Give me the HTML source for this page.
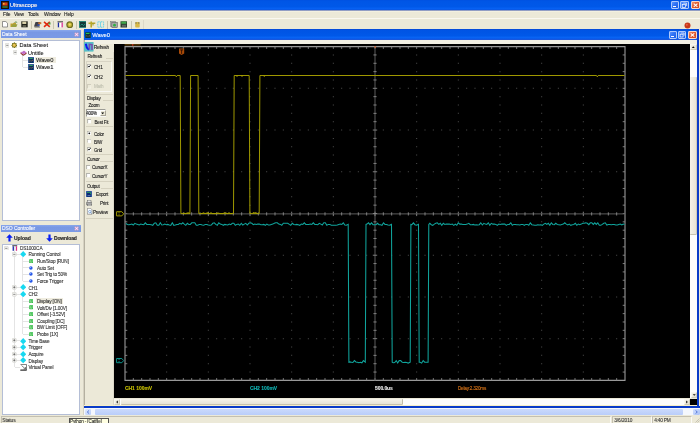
<!DOCTYPE html>
<html><head><meta charset="utf-8"><style>*{margin:0;padding:0;box-sizing:border-box}
html,body{width:700px;height:423px;overflow:hidden}
body{position:relative;background:#ECE9D8;font-family:"Liberation Sans",sans-serif;font-size:5px;line-height:1;color:#000}
.a{position:absolute;display:block}
.t{position:absolute;white-space:nowrap;line-height:1;-webkit-text-stroke:0.1px currentColor}</style></head><body><div style="position:absolute;left:0;top:0;width:700px;height:423px;overflow:hidden;will-change:transform">
<div class="a" style="left:0px;top:0px;width:700px;height:11px;background:linear-gradient(#0050e0 0%,#0056e6 9%,#0058e8 60%,#0862f4 80%,#0a58e4 88%,#8090c0 92%,#a8b0c8 100%)"></div>
<div class="a" style="left:0px;top:11px;width:700px;height:1px;background:#f3f0e0"></div>
<svg class="a" style="left:1px;top:1px" width="8" height="8" viewBox="0 0 8 8"><rect x=".5" y=".5" width="7" height="7" fill="#3a2010" stroke="#181008"/><rect x="1.5" y="1.5" width="5" height="3" fill="#d84018"/><rect x="2" y="2" width="1.5" height="1.5" fill="#f0c030"/><rect x="1.5" y="5.5" width="5" height="1" fill="#30b050"/></svg>
<div class="t" style="left:9.8px;top:2px;font-size:6px;letter-spacing:-0.13px;color:#fff;text-shadow:0.4px 0.4px 0 #0a2a90">Ultrascope</div>
<div class="a" style="left:671.2px;top:0.7px;width:8.3px;height:8.5px;background:linear-gradient(135deg,#5a94ff,#2f72f4 45%,#1e5ee8);border:0.6px solid rgba(220,232,255,0.75);border-radius:1.4px"></div>
<div class="a" style="left:673.2px;top:5.999999999999999px;width:3.2px;height:1.1px;background:#fff"></div>
<div class="a" style="left:680.3px;top:0.7px;width:8.8px;height:8.5px;background:linear-gradient(135deg,#5a94ff,#2f72f4 45%,#1e5ee8);border:0.6px solid rgba(220,232,255,0.75);border-radius:1.4px"></div>
<svg class="a" style="left:680.3px;top:0.7px" width="8.8" height="8.5" viewBox="0 0 8.8 8.5"><path d="M3.34 2.12H6.60V4.93" fill="none" stroke="#fff" stroke-width=".7"/><rect x="2.20" y="3.40" width="3.26" height="2.97" fill="none" stroke="#fff" stroke-width=".7"/></svg>
<div class="a" style="left:690.8px;top:0.7px;width:9.2px;height:8.5px;background:linear-gradient(135deg,#f0906c,#e05a30 45%,#d04820);border:0.6px solid rgba(255,235,225,0.85);border-radius:1.4px"></div>
<svg class="a" style="left:690.8px;top:0.7px" width="9.2" height="8.5" viewBox="0 0 9.2 8.5"><path d="M2.76 2.55L6.44 5.95M6.44 2.55L2.76 5.95" stroke="#fff" stroke-width="1.1"/></svg>
<div class="t" style="left:3px;top:13px;font-size:4.9px;letter-spacing:-0.15px;color:#222">File</div>
<div class="t" style="left:14px;top:13px;font-size:4.9px;letter-spacing:-0.15px;color:#222">View</div>
<div class="t" style="left:28px;top:13px;font-size:4.9px;letter-spacing:-0.15px;color:#222">Tools</div>
<div class="t" style="left:44px;top:13px;font-size:4.9px;letter-spacing:-0.15px;color:#222">Window</div>
<div class="t" style="left:64px;top:13px;font-size:4.9px;letter-spacing:-0.15px;color:#222">Help</div>
<div class="a" style="left:0px;top:18.3px;width:700px;height:0.8px;background:#faf8f0"></div>
<svg class="a" style="left:2px;top:21.2px" width="6" height="6.5" viewBox="0 0 6 6.5"><path d="M.5 .5H3.8L5.5 2.2V6H.5Z" fill="#fff" stroke="#505050" stroke-width=".6"/></svg>
<svg class="a" style="left:10px;top:21.2px" width="8" height="6.5" viewBox="0 0 8 6.5"><path d="M.5 2.5H3L3.5 1.8H6V6H.5Z" fill="#c0a030"/><path d="M1 6L2.5 3.3H7.5L6.3 6Z" fill="#98a040"/><path d="M4.5 1.5Q6 .2 7.2 1.5" stroke="#307030" stroke-width=".7" fill="none"/></svg>
<svg class="a" style="left:20.5px;top:21.2px" width="7" height="6.5" viewBox="0 0 7 6.5"><rect x=".3" y=".3" width="6.4" height="6" fill="#202018"/><rect x="1.3" y=".6" width="4" height="2.4" fill="#d8d0a8"/><rect x="1.6" y="4" width="3.6" height="2" fill="#606050"/></svg>
<div class="a" style="left:31px;top:20.5px;width:0.8px;height:8px;background:#c8c4b0"></div>
<svg class="a" style="left:33.5px;top:21.2px" width="8" height="6.5" viewBox="0 0 8 6.5"><path d="M1.5 1H6.5L5 5.5H0Z" fill="#404048"/><rect x="4.3" y="1.3" width="3" height="1.8" fill="#d07028"/><rect x="3.5" y="3.5" width="2" height="1.5" fill="#3050c0"/><path d="M.5 6H6" stroke="#303030" stroke-width=".7"/></svg>
<svg class="a" style="left:43px;top:21.2px" width="8" height="6.5" viewBox="0 0 8 6.5"><path d="M1 .8L6.8 5.8M6.8 .8L1 5.8" stroke="#e02810" stroke-width="1.6"/><rect x="5.5" y="1.5" width="2" height="2" fill="#40a040"/></svg>
<div class="a" style="left:53px;top:20.5px;width:0.8px;height:8px;background:#c8c4b0"></div>
<svg class="a" style="left:56.5px;top:21.2px" width="7" height="6.5" viewBox="0 0 7 6.5"><path d="M.5 .8H6" stroke="#404040" stroke-width="1"/><rect x=".8" y="1.5" width="1.4" height="4.8" fill="#1a2ca0"/><rect x="4.5" y="1.5" width="1.4" height="4.8" fill="#e040a0"/><rect x="2.5" y="2" width="1.6" height="4.3" fill="#fff"/></svg>
<svg class="a" style="left:65.5px;top:20.9px" width="7.5" height="7.5" viewBox="0 0 7.5 7.5"><circle cx="3.75" cy="3.75" r="3.5" fill="#707020"/><circle cx="3.75" cy="3.75" r="2.2" fill="#c8b838"/><circle cx="3.75" cy="3.5" r="1" fill="#f0e070"/></svg>
<div class="a" style="left:76px;top:20.5px;width:0.8px;height:8px;background:#c8c4b0"></div>
<svg class="a" style="left:78.5px;top:21.2px" width="7.5" height="6.8" viewBox="0 0 7.5 6.8"><rect x=".4" y=".4" width="6.7" height="6" fill="#153838" stroke="#108878" stroke-width=".7"/><path d="M1.5 4.5L3 3 4.5 4.5 6 3" stroke="#30c0a0" stroke-width=".6" fill="none"/></svg>
<svg class="a" style="left:87.5px;top:21.2px" width="8" height="7" viewBox="0 0 8 7"><path d="M3.2 .5V6.5M.5 2.2H7.3" stroke="#b8a828" stroke-width="1.6"/><path d="M5 2.2V4.5" stroke="#989020" stroke-width="1"/></svg>
<svg class="a" style="left:97px;top:21.2px" width="7.5" height="7" viewBox="0 0 7.5 7"><rect x=".8" y=".8" width="5.8" height="5.4" fill="none" stroke="#38c8e8" stroke-width=".8" stroke-dasharray="1 .6"/><path d="M3.5 1V6" stroke="#38c8e8" stroke-width=".6"/></svg>
<div class="a" style="left:107px;top:20.5px;width:0.8px;height:8px;background:#c8c4b0"></div>
<svg class="a" style="left:110px;top:21.2px" width="8" height="7" viewBox="0 0 8 7"><rect x=".5" y=".3" width="5" height="5" fill="#c0c0c0" stroke="#707070" stroke-width=".5"/><rect x="1.8" y="1.5" width="5.5" height="5.2" fill="#a8a8a8" stroke="#505050" stroke-width=".5"/><circle cx="4.5" cy="4.2" r="1.4" fill="#30b040"/></svg>
<svg class="a" style="left:119.5px;top:21.2px" width="8" height="7" viewBox="0 0 8 7"><rect x=".5" y=".3" width="6.5" height="6.2" fill="#304030"/><rect x="1.3" y=".6" width="5" height="2.2" fill="#40a848"/><rect x="2" y="3.8" width="4" height="2" fill="#606860"/></svg>
<div class="a" style="left:131px;top:20.5px;width:0.8px;height:8px;background:#c8c4b0"></div>
<svg class="a" style="left:133.5px;top:21.2px" width="7" height="7" viewBox="0 0 7 7"><rect x="1.2" y="1" width="4.5" height="5.5" fill="#d8b848" rx=".8"/><path d="M2 1V3M4.8 1V3" stroke="#606060" stroke-width=".6"/></svg>
<div class="a" style="left:143px;top:20px;width:0.7px;height:9px;background:#dcd8c8"></div>
<svg class="a" style="left:683.5px;top:21.5px" width="7" height="7" viewBox="0 0 7 7"><circle cx="3.5" cy="3.5" r="3" fill="#c83818"/><circle cx="2.8" cy="2.8" r="1" fill="#e86040"/></svg>
<div class="a" style="left:1.2px;top:30px;width:79.6px;height:7.6px;background:linear-gradient(#8aa8ec,#7898e4 30%,#7a9ae6)"></div>
<div class="t" style="left:2px;top:32px;font-size:5px;letter-spacing:-0.05px;color:#fff">Data Sheet</div>
<svg class="a" style="left:74px;top:31.5px" width="5.2" height="5" viewBox="0 0 5.2 5"><rect x=".3" y=".3" width="4.6" height="4.4" fill="#a8a0b8" opacity=".5"/><path d="M1 1L4.2 4M4.2 1L1 4" stroke="#e8a8d8" stroke-width="1.5"/><path d="M1.5 1.5L3.7 3.5M3.7 1.5L1.5 3.5" stroke="#fff" stroke-width=".7"/></svg>
<div class="a" style="left:2.2px;top:40.4px;width:78.3px;height:180.5px;background:#fff;border:0.7px solid #b4bed6"></div>
<div class="a" style="left:22.2px;top:55px;width:0.6px;height:12px;background:#e4e4e4"></div>
<div class="a" style="left:22.5px;top:59.900000000000006px;width:5.5px;height:0.6px;background:#e4e4e4"></div>
<div class="a" style="left:22.5px;top:66.7px;width:5.5px;height:0.6px;background:#e4e4e4"></div>
<svg class="a" style="left:4.5px;top:43.1px" width="4.6" height="4.6" viewBox="0 0 4.6 4.6"><rect x=".4" y=".4" width="3.8" height="3.8" rx=".6" fill="#fbfbf9" stroke="#cacac2" stroke-width=".6"/><path d="M1.2 2.3H3.4" stroke="#505050" stroke-width=".7"/></svg>
<svg class="a" style="left:10.9px;top:41.9px" width="6.6" height="6.6" viewBox="0 0 6.6 6.6"><path d="M3.30 0.10L4.14 1.27L5.56 1.04L5.33 2.46L6.50 3.30L5.33 4.14L5.56 5.56L4.14 5.33L3.30 6.50L2.46 5.33L1.04 5.56L1.27 4.14L0.10 3.30L1.27 2.46L1.04 1.04L2.46 1.27Z" fill="#6a6a10"/><circle cx="3.3" cy="3.3" r="1.7" fill="#d8b040"/><circle cx="3.1" cy="3" r=".8" fill="#f8e080"/></svg>
<div class="t" style="left:19.5px;top:43px;font-size:5.6px;letter-spacing:0.05px;color:#202020">Data Sheet</div>
<svg class="a" style="left:12.5px;top:50.300000000000004px" width="4.6" height="4.6" viewBox="0 0 4.6 4.6"><rect x=".4" y=".4" width="3.8" height="3.8" rx=".6" fill="#fbfbf9" stroke="#cacac2" stroke-width=".6"/><path d="M1.2 2.3H3.4" stroke="#505050" stroke-width=".7"/></svg>
<svg class="a" style="left:19.5px;top:49px" width="7" height="7" viewBox="0 0 7 7"><path d="M.5 4.2L3.2 6.5 6.5 4.6V3.6L3.4 5.6.5 3.4Z" fill="#b02818"/><path d="M.5 3.4L3.4 5.6 6.5 3.6 4 1.4Z" fill="#c070c8"/><path d="M1.8 2.6L4.2 .6 5.4 1.6" stroke="#fff" stroke-width=".8" fill="none"/><path d="M.5 4.2L3.2 6.5 6.5 4.6" stroke="#401010" stroke-width=".5" fill="none"/></svg>
<div class="t" style="left:28px;top:51px;font-size:5.5px;color:#202020">Untitle</div>
<div class="a" style="left:35px;top:57.3px;width:20.5px;height:6px;background:#efecdf"></div>
<svg class="a" style="left:28px;top:57.0px" width="6.2" height="6.4" viewBox="0 0 6.2 6.4"><rect x=".3" y=".3" width="5.6" height="5.8" fill="#0a2a60" stroke="#2050a0" stroke-width=".5"/><rect x="1.2" y="1" width="3.6" height="1" fill="#30a060"/><path d="M1 4.6L2.2 3.4 3.2 4.4 4.2 3.2 5.2 4" stroke="#c09040" stroke-width=".5" fill="none"/></svg>
<div class="t" style="left:36px;top:58px;font-size:5.8px;letter-spacing:-0.1px;color:#202020">Wave0</div>
<svg class="a" style="left:28px;top:63.8px" width="6.2" height="6.4" viewBox="0 0 6.2 6.4"><rect x=".3" y=".3" width="5.6" height="5.8" fill="#0a2a60" stroke="#2050a0" stroke-width=".5"/><rect x="1.2" y="1" width="3.6" height="1" fill="#30a060"/><path d="M1 4.6L2.2 3.4 3.2 4.4 4.2 3.2 5.2 4" stroke="#c09040" stroke-width=".5" fill="none"/></svg>
<div class="t" style="left:36px;top:65px;font-size:5.8px;letter-spacing:-0.1px;color:#202020">Wave1</div>
<div class="a" style="left:1.2px;top:224.5px;width:79.6px;height:7.6px;background:linear-gradient(#8aa8ec,#7898e4 30%,#7a9ae6)"></div>
<div class="t" style="left:2px;top:226px;font-size:5px;letter-spacing:-0.05px;color:#fff">DSO Controller</div>
<svg class="a" style="left:74px;top:226.0px" width="5.2" height="5" viewBox="0 0 5.2 5"><rect x=".3" y=".3" width="4.6" height="4.4" fill="#a8a0b8" opacity=".5"/><path d="M1 1L4.2 4M4.2 1L1 4" stroke="#e8a8d8" stroke-width="1.5"/><path d="M1.5 1.5L3.7 3.5M3.7 1.5L1.5 3.5" stroke="#fff" stroke-width=".7"/></svg>
<svg class="a" style="left:5.5px;top:233.5px" width="7" height="8" viewBox="0 0 7 8"><path d="M3.5 .3L6.8 3.7H4.6V7.6H2.4V3.7H.2Z" fill="#0a20f0"/></svg>
<div class="t" style="left:14px;top:236px;font-size:5px;letter-spacing:-0.05px;color:#181818;font-weight:bold">Upload</div>
<svg class="a" style="left:46px;top:233.5px" width="7" height="8" viewBox="0 0 7 8"><path d="M3.5 7.7L6.8 4.3H4.6V.4H2.4V4.3H.2Z" fill="#0a20f0"/></svg>
<div class="t" style="left:54px;top:236px;font-size:5px;letter-spacing:-0.15px;color:#181818;font-weight:bold">Download</div>
<div class="a" style="left:2.2px;top:243.5px;width:78.3px;height:171.3px;background:#fff;border:0.7px solid #b4bed6"></div>
<div class="a" style="left:14.2px;top:250.3px;width:0.6px;height:117.01999999999998px;background:#e4e4e4"></div>
<div class="a" style="left:22.2px;top:256.94px;width:0.6px;height:24.060000000000002px;background:#e4e4e4"></div>
<div class="a" style="left:22.2px;top:296.78000000000003px;width:0.6px;height:37.339999999999975px;background:#e4e4e4"></div>
<svg class="a" style="left:4.1px;top:245.5px" width="4.6" height="4.6" viewBox="0 0 4.6 4.6"><rect x=".4" y=".4" width="3.8" height="3.8" rx=".6" fill="#fbfbf9" stroke="#cacac2" stroke-width=".6"/><path d="M1.2 2.3H3.4" stroke="#505050" stroke-width=".7"/></svg>
<svg class="a" style="left:11.5px;top:244.8px" width="6" height="6" viewBox="0 0 6 6"><path d="M.3 .8H5.2" stroke="#303030" stroke-width="1"/><rect x=".6" y="1.3" width="1.3" height="4.5" fill="#1828a8"/><rect x="3.8" y="1.3" width="1.3" height="4.5" fill="#e03080"/><rect x="2" y="1.6" width="1.6" height="4.2" fill="#e8e8f0"/></svg>
<div class="t" style="left:19.9px;top:247px;font-size:4.7px;letter-spacing:-0.12px;color:#333333">DS1000CA</div>
<div class="a" style="left:14.5px;top:254.14px;width:5.5px;height:0.6px;background:#e4e4e4"></div>
<svg class="a" style="left:12.3px;top:252.14px" width="4.6" height="4.6" viewBox="0 0 4.6 4.6"><rect x=".4" y=".4" width="3.8" height="3.8" rx=".6" fill="#fbfbf9" stroke="#cacac2" stroke-width=".6"/><path d="M1.2 2.3H3.4" stroke="#505050" stroke-width=".7"/></svg>
<svg class="a" style="left:19.8px;top:251.24px" width="6.4" height="6.4" viewBox="0 0 6.4 6.4"><path d="M3.2 .1L6.3 3.2 3.2 6.3 .1 3.2Z" fill="#18d8f0"/></svg>
<div class="t" style="left:28.4px;top:253px;font-size:4.7px;letter-spacing:-0.12px;color:#333333">Running Control</div>
<div class="a" style="left:22.5px;top:260.78px;width:6.5px;height:0.6px;background:#e4e4e4"></div>
<svg class="a" style="left:28.8px;top:258.88px" width="4.4" height="4.4" viewBox="0 0 4.4 4.4"><rect x=".2" y=".2" width="4" height="4" fill="#28b840" rx=".6"/><path d="M1.3 1V3.2H3.1V1" stroke="#c8f0c0" stroke-width=".6" fill="none"/></svg>
<div class="t" style="left:36.9px;top:260px;font-size:4.7px;letter-spacing:-0.12px;color:#333333">Run/Stop [RUN]</div>
<div class="a" style="left:22.5px;top:267.42px;width:6.5px;height:0.6px;background:#e4e4e4"></div>
<svg class="a" style="left:29.2px;top:265.82000000000005px" width="3.8" height="3.8" viewBox="0 0 3.8 3.8"><circle cx="1.9" cy="1.9" r="1.75" fill="#2858e8"/><circle cx="1.5" cy="1.4" r=".6" fill="#80a8ff"/></svg>
<div class="t" style="left:36.9px;top:267px;font-size:4.7px;letter-spacing:-0.12px;color:#333333">Auto Set</div>
<div class="a" style="left:22.5px;top:274.06px;width:6.5px;height:0.6px;background:#e4e4e4"></div>
<svg class="a" style="left:29.2px;top:272.46000000000004px" width="3.8" height="3.8" viewBox="0 0 3.8 3.8"><circle cx="1.9" cy="1.9" r="1.75" fill="#2858e8"/><circle cx="1.5" cy="1.4" r=".6" fill="#80a8ff"/></svg>
<div class="t" style="left:36.9px;top:273px;font-size:4.7px;letter-spacing:-0.12px;color:#333333">Set Trig to 50%</div>
<div class="a" style="left:22.5px;top:280.7px;width:6.5px;height:0.6px;background:#e4e4e4"></div>
<svg class="a" style="left:29.2px;top:279.1px" width="3.8" height="3.8" viewBox="0 0 3.8 3.8"><circle cx="1.9" cy="1.9" r="1.75" fill="#2858e8"/><circle cx="1.5" cy="1.4" r=".6" fill="#80a8ff"/></svg>
<div class="t" style="left:36.9px;top:280px;font-size:4.7px;letter-spacing:-0.12px;color:#333333">Force Trigger</div>
<div class="a" style="left:14.5px;top:287.34px;width:5.5px;height:0.6px;background:#e4e4e4"></div>
<svg class="a" style="left:12.3px;top:285.34px" width="4.6" height="4.6" viewBox="0 0 4.6 4.6"><rect x=".4" y=".4" width="3.8" height="3.8" rx=".6" fill="#fbfbf9" stroke="#cacac2" stroke-width=".6"/><path d="M1.2 2.3H3.4" stroke="#505050" stroke-width=".7"/><path d="M2.3 1.2V3.4" stroke="#505050" stroke-width=".7"/></svg>
<svg class="a" style="left:19.8px;top:284.44px" width="6.4" height="6.4" viewBox="0 0 6.4 6.4"><path d="M3.2 .1L6.3 3.2 3.2 6.3 .1 3.2Z" fill="#18d8f0"/></svg>
<div class="t" style="left:28.4px;top:287px;font-size:4.7px;letter-spacing:-0.12px;color:#333333">CH1</div>
<div class="a" style="left:14.5px;top:293.98px;width:5.5px;height:0.6px;background:#e4e4e4"></div>
<svg class="a" style="left:12.3px;top:291.98px" width="4.6" height="4.6" viewBox="0 0 4.6 4.6"><rect x=".4" y=".4" width="3.8" height="3.8" rx=".6" fill="#fbfbf9" stroke="#cacac2" stroke-width=".6"/><path d="M1.2 2.3H3.4" stroke="#505050" stroke-width=".7"/></svg>
<svg class="a" style="left:19.8px;top:291.08000000000004px" width="6.4" height="6.4" viewBox="0 0 6.4 6.4"><path d="M3.2 .1L6.3 3.2 3.2 6.3 .1 3.2Z" fill="#18d8f0"/></svg>
<div class="t" style="left:28.4px;top:293px;font-size:4.7px;letter-spacing:-0.12px;color:#333333">CH2</div>
<div class="a" style="left:22.5px;top:300.62px;width:6.5px;height:0.6px;background:#e4e4e4"></div>
<svg class="a" style="left:28.8px;top:298.72px" width="4.4" height="4.4" viewBox="0 0 4.4 4.4"><rect x=".2" y=".2" width="4" height="4" fill="#28b840" rx=".6"/><path d="M1.3 1V3.2H3.1V1" stroke="#c8f0c0" stroke-width=".6" fill="none"/></svg>
<div class="a" style="left:35.5px;top:297.92px;width:27.5px;height:6px;background:#efecdf"></div>
<div class="t" style="left:36.9px;top:300px;font-size:4.7px;letter-spacing:-0.12px;color:#333333">Display [ON]</div>
<div class="a" style="left:22.5px;top:307.26px;width:6.5px;height:0.6px;background:#e4e4e4"></div>
<svg class="a" style="left:28.8px;top:305.36px" width="4.4" height="4.4" viewBox="0 0 4.4 4.4"><rect x=".2" y=".2" width="4" height="4" fill="#28b840" rx=".6"/><path d="M1.3 1V3.2H3.1V1" stroke="#c8f0c0" stroke-width=".6" fill="none"/></svg>
<div class="t" style="left:36.9px;top:307px;font-size:4.7px;letter-spacing:-0.12px;color:#333333">Volt/Div [1.00V]</div>
<div class="a" style="left:22.5px;top:313.9px;width:6.5px;height:0.6px;background:#e4e4e4"></div>
<svg class="a" style="left:28.8px;top:312.0px" width="4.4" height="4.4" viewBox="0 0 4.4 4.4"><rect x=".2" y=".2" width="4" height="4" fill="#28b840" rx=".6"/><path d="M1.3 1V3.2H3.1V1" stroke="#c8f0c0" stroke-width=".6" fill="none"/></svg>
<div class="t" style="left:36.9px;top:313px;font-size:4.7px;letter-spacing:-0.12px;color:#333333">Offset [-3.52V]</div>
<div class="a" style="left:22.5px;top:320.54px;width:6.5px;height:0.6px;background:#e4e4e4"></div>
<svg class="a" style="left:28.8px;top:318.64000000000004px" width="4.4" height="4.4" viewBox="0 0 4.4 4.4"><rect x=".2" y=".2" width="4" height="4" fill="#28b840" rx=".6"/><path d="M1.3 1V3.2H3.1V1" stroke="#c8f0c0" stroke-width=".6" fill="none"/></svg>
<div class="t" style="left:36.9px;top:320px;font-size:4.7px;letter-spacing:-0.12px;color:#333333">Coupling [DC]</div>
<div class="a" style="left:22.5px;top:327.18px;width:6.5px;height:0.6px;background:#e4e4e4"></div>
<svg class="a" style="left:28.8px;top:325.28000000000003px" width="4.4" height="4.4" viewBox="0 0 4.4 4.4"><rect x=".2" y=".2" width="4" height="4" fill="#28b840" rx=".6"/><path d="M1.3 1V3.2H3.1V1" stroke="#c8f0c0" stroke-width=".6" fill="none"/></svg>
<div class="t" style="left:36.9px;top:326px;font-size:4.7px;letter-spacing:-0.12px;color:#333333">BW Limit [OFF]</div>
<div class="a" style="left:22.5px;top:333.82px;width:6.5px;height:0.6px;background:#e4e4e4"></div>
<svg class="a" style="left:28.8px;top:331.92px" width="4.4" height="4.4" viewBox="0 0 4.4 4.4"><rect x=".2" y=".2" width="4" height="4" fill="#28b840" rx=".6"/><path d="M1.3 1V3.2H3.1V1" stroke="#c8f0c0" stroke-width=".6" fill="none"/></svg>
<div class="t" style="left:36.9px;top:333px;font-size:4.7px;letter-spacing:-0.12px;color:#333333">Probe [1X]</div>
<div class="a" style="left:14.5px;top:340.46px;width:5.5px;height:0.6px;background:#e4e4e4"></div>
<svg class="a" style="left:12.3px;top:338.46px" width="4.6" height="4.6" viewBox="0 0 4.6 4.6"><rect x=".4" y=".4" width="3.8" height="3.8" rx=".6" fill="#fbfbf9" stroke="#cacac2" stroke-width=".6"/><path d="M1.2 2.3H3.4" stroke="#505050" stroke-width=".7"/><path d="M2.3 1.2V3.4" stroke="#505050" stroke-width=".7"/></svg>
<svg class="a" style="left:19.8px;top:337.56px" width="6.4" height="6.4" viewBox="0 0 6.4 6.4"><path d="M3.2 .1L6.3 3.2 3.2 6.3 .1 3.2Z" fill="#18d8f0"/></svg>
<div class="t" style="left:28.4px;top:340px;font-size:4.7px;letter-spacing:-0.12px;color:#333333">Time Base</div>
<div class="a" style="left:14.5px;top:347.09999999999997px;width:5.5px;height:0.6px;background:#e4e4e4"></div>
<svg class="a" style="left:12.3px;top:345.09999999999997px" width="4.6" height="4.6" viewBox="0 0 4.6 4.6"><rect x=".4" y=".4" width="3.8" height="3.8" rx=".6" fill="#fbfbf9" stroke="#cacac2" stroke-width=".6"/><path d="M1.2 2.3H3.4" stroke="#505050" stroke-width=".7"/><path d="M2.3 1.2V3.4" stroke="#505050" stroke-width=".7"/></svg>
<svg class="a" style="left:19.8px;top:344.2px" width="6.4" height="6.4" viewBox="0 0 6.4 6.4"><path d="M3.2 .1L6.3 3.2 3.2 6.3 .1 3.2Z" fill="#18d8f0"/></svg>
<div class="t" style="left:28.4px;top:346px;font-size:4.7px;letter-spacing:-0.12px;color:#333333">Trigger</div>
<div class="a" style="left:14.5px;top:353.74px;width:5.5px;height:0.6px;background:#e4e4e4"></div>
<svg class="a" style="left:12.3px;top:351.74px" width="4.6" height="4.6" viewBox="0 0 4.6 4.6"><rect x=".4" y=".4" width="3.8" height="3.8" rx=".6" fill="#fbfbf9" stroke="#cacac2" stroke-width=".6"/><path d="M1.2 2.3H3.4" stroke="#505050" stroke-width=".7"/><path d="M2.3 1.2V3.4" stroke="#505050" stroke-width=".7"/></svg>
<svg class="a" style="left:19.8px;top:350.84000000000003px" width="6.4" height="6.4" viewBox="0 0 6.4 6.4"><path d="M3.2 .1L6.3 3.2 3.2 6.3 .1 3.2Z" fill="#18d8f0"/></svg>
<div class="t" style="left:28.4px;top:353px;font-size:4.7px;letter-spacing:-0.12px;color:#333333">Acquire</div>
<div class="a" style="left:14.5px;top:360.38px;width:5.5px;height:0.6px;background:#e4e4e4"></div>
<svg class="a" style="left:12.3px;top:358.38px" width="4.6" height="4.6" viewBox="0 0 4.6 4.6"><rect x=".4" y=".4" width="3.8" height="3.8" rx=".6" fill="#fbfbf9" stroke="#cacac2" stroke-width=".6"/><path d="M1.2 2.3H3.4" stroke="#505050" stroke-width=".7"/><path d="M2.3 1.2V3.4" stroke="#505050" stroke-width=".7"/></svg>
<svg class="a" style="left:19.8px;top:357.48px" width="6.4" height="6.4" viewBox="0 0 6.4 6.4"><path d="M3.2 .1L6.3 3.2 3.2 6.3 .1 3.2Z" fill="#18d8f0"/></svg>
<div class="t" style="left:28.4px;top:360px;font-size:4.7px;letter-spacing:-0.12px;color:#333333">Display</div>
<div class="a" style="left:14.5px;top:367.02px;width:5.5px;height:0.6px;background:#e4e4e4"></div>
<svg class="a" style="left:19.5px;top:364.12px" width="7" height="6.5" viewBox="0 0 7 6.5"><path d="M.5 .5H6.5V6H.5" fill="#fff" stroke="#303030" stroke-width=".6"/><path d="M1.5 1.5L5.5 5M3.5 5H5.5V3" stroke="#303030" stroke-width=".6" fill="none"/><path d="M.3 6.2H6.7" stroke="#303030" stroke-width=".9"/></svg>
<div class="t" style="left:28.4px;top:366px;font-size:4.7px;letter-spacing:-0.12px;color:#333333">Virtual Panel</div>
<div class="a" style="left:83px;top:29.5px;width:2px;height:386px;background:linear-gradient(90deg,#d6d2c2 50%,#b4b0a0 50%)"></div>
<div class="a" style="left:84px;top:29px;width:615px;height:11px;background:linear-gradient(#0a48d4 0%,#0054e4 10%,#0058e8 60%,#0a66f6 82%,#0850e0 92%,#3060d8 100%)"></div>
<svg class="a" style="left:85px;top:31.5px" width="6" height="6.8" viewBox="0 0 6 6.8"><rect x=".2" y=".2" width="5.6" height="6.4" fill="#0a3040" stroke="#106850" stroke-width=".4"/><rect x="1" y="1" width="3.5" height=".9" fill="#30d050"/><path d="M.8 4.5L2 3.5 3 4.5 4 3.5 5.2 4.5" stroke="#c08030" stroke-width=".5" fill="none"/></svg>
<div class="t" style="left:92.3px;top:33px;font-size:5.8px;letter-spacing:-0.05px;color:#fff">Wave0</div>
<div class="a" style="left:669px;top:31.3px;width:8.2px;height:8px;background:linear-gradient(135deg,#5a94ff,#2f72f4 45%,#1e5ee8);border:0.6px solid rgba(220,232,255,0.75);border-radius:1.4px"></div>
<div class="a" style="left:671px;top:36.099999999999994px;width:3.2px;height:1.1px;background:#fff"></div>
<div class="a" style="left:678px;top:31.3px;width:8.2px;height:8px;background:linear-gradient(135deg,#5a94ff,#2f72f4 45%,#1e5ee8);border:0.6px solid rgba(220,232,255,0.75);border-radius:1.4px"></div>
<svg class="a" style="left:678px;top:31.3px" width="8.2" height="8" viewBox="0 0 8.2 8"><path d="M3.12 2.00H6.15V4.64" fill="none" stroke="#fff" stroke-width=".7"/><rect x="2.05" y="3.20" width="3.03" height="2.80" fill="none" stroke="#fff" stroke-width=".7"/></svg>
<div class="a" style="left:687.8px;top:31.3px;width:9px;height:8px;background:linear-gradient(135deg,#f0906c,#e05a30 45%,#d04820);border:0.6px solid rgba(255,235,225,0.85);border-radius:1.4px"></div>
<svg class="a" style="left:687.8px;top:31.3px" width="9" height="8" viewBox="0 0 9 8"><path d="M2.70 2.40L6.30 5.60M6.30 2.40L2.70 5.60" stroke="#fff" stroke-width="1.1"/></svg>
<div class="a" style="left:85px;top:40.4px;width:612.5px;height:365px;background:#ECE9D8"></div>
<div class="a" style="left:85px;top:40.4px;width:612.5px;height:3.4px;background:#f2f0e4"></div>
<div class="a" style="left:84px;top:405.2px;width:615px;height:0.8px;background:#f8f0c8"></div>
<div class="a" style="left:84px;top:406px;width:616px;height:2px;background:#0a3cc8"></div>
<div class="a" style="left:697.4px;top:29.4px;width:2px;height:378px;background:#0a3cc8"></div>
<div class="a" style="left:114px;top:44.1px;width:576px;height:354.4px;background:#000"></div>
<svg style="position:absolute;left:0;top:0" width="700" height="423" viewBox="0 0 700 423"><path d="M125.0 46.6H625.0V380.4H125.0Z" fill="none" stroke="#999" stroke-width="1.1"/><path d="M133.33 46.6v2.3M133.33 380.4v-2.3M141.67 46.6v2.3M141.67 380.4v-2.3M150.00 46.6v2.3M150.00 380.4v-2.3M158.33 46.6v2.3M158.33 380.4v-2.3M166.67 46.6v2.3M166.67 380.4v-2.3M175.00 46.6v2.3M175.00 380.4v-2.3M183.33 46.6v2.3M183.33 380.4v-2.3M191.67 46.6v2.3M191.67 380.4v-2.3M200.00 46.6v2.3M200.00 380.4v-2.3M208.33 46.6v2.3M208.33 380.4v-2.3M216.67 46.6v2.3M216.67 380.4v-2.3M225.00 46.6v2.3M225.00 380.4v-2.3M233.33 46.6v2.3M233.33 380.4v-2.3M241.67 46.6v2.3M241.67 380.4v-2.3M250.00 46.6v2.3M250.00 380.4v-2.3M258.33 46.6v2.3M258.33 380.4v-2.3M266.67 46.6v2.3M266.67 380.4v-2.3M275.00 46.6v2.3M275.00 380.4v-2.3M283.33 46.6v2.3M283.33 380.4v-2.3M291.67 46.6v2.3M291.67 380.4v-2.3M300.00 46.6v2.3M300.00 380.4v-2.3M308.33 46.6v2.3M308.33 380.4v-2.3M316.67 46.6v2.3M316.67 380.4v-2.3M325.00 46.6v2.3M325.00 380.4v-2.3M333.33 46.6v2.3M333.33 380.4v-2.3M341.67 46.6v2.3M341.67 380.4v-2.3M350.00 46.6v2.3M350.00 380.4v-2.3M358.33 46.6v2.3M358.33 380.4v-2.3M366.67 46.6v2.3M366.67 380.4v-2.3M375.00 46.6v2.3M375.00 380.4v-2.3M383.33 46.6v2.3M383.33 380.4v-2.3M391.67 46.6v2.3M391.67 380.4v-2.3M400.00 46.6v2.3M400.00 380.4v-2.3M408.33 46.6v2.3M408.33 380.4v-2.3M416.67 46.6v2.3M416.67 380.4v-2.3M425.00 46.6v2.3M425.00 380.4v-2.3M433.33 46.6v2.3M433.33 380.4v-2.3M441.67 46.6v2.3M441.67 380.4v-2.3M450.00 46.6v2.3M450.00 380.4v-2.3M458.33 46.6v2.3M458.33 380.4v-2.3M466.67 46.6v2.3M466.67 380.4v-2.3M475.00 46.6v2.3M475.00 380.4v-2.3M483.33 46.6v2.3M483.33 380.4v-2.3M491.67 46.6v2.3M491.67 380.4v-2.3M500.00 46.6v2.3M500.00 380.4v-2.3M508.33 46.6v2.3M508.33 380.4v-2.3M516.67 46.6v2.3M516.67 380.4v-2.3M525.00 46.6v2.3M525.00 380.4v-2.3M533.33 46.6v2.3M533.33 380.4v-2.3M541.67 46.6v2.3M541.67 380.4v-2.3M550.00 46.6v2.3M550.00 380.4v-2.3M558.33 46.6v2.3M558.33 380.4v-2.3M566.67 46.6v2.3M566.67 380.4v-2.3M575.00 46.6v2.3M575.00 380.4v-2.3M583.33 46.6v2.3M583.33 380.4v-2.3M591.67 46.6v2.3M591.67 380.4v-2.3M600.00 46.6v2.3M600.00 380.4v-2.3M608.33 46.6v2.3M608.33 380.4v-2.3M616.67 46.6v2.3M616.67 380.4v-2.3M125.0 54.95h2.3M625.0 54.95h-2.3M125.0 63.29h2.3M625.0 63.29h-2.3M125.0 71.63h2.3M625.0 71.63h-2.3M125.0 79.98h2.3M625.0 79.98h-2.3M125.0 88.32h2.3M625.0 88.32h-2.3M125.0 96.67h2.3M625.0 96.67h-2.3M125.0 105.01h2.3M625.0 105.01h-2.3M125.0 113.36h2.3M625.0 113.36h-2.3M125.0 121.70h2.3M625.0 121.70h-2.3M125.0 130.05h2.3M625.0 130.05h-2.3M125.0 138.39h2.3M625.0 138.39h-2.3M125.0 146.74h2.3M625.0 146.74h-2.3M125.0 155.08h2.3M625.0 155.08h-2.3M125.0 163.43h2.3M625.0 163.43h-2.3M125.0 171.77h2.3M625.0 171.77h-2.3M125.0 180.12h2.3M625.0 180.12h-2.3M125.0 188.46h2.3M625.0 188.46h-2.3M125.0 196.81h2.3M625.0 196.81h-2.3M125.0 205.15h2.3M625.0 205.15h-2.3M125.0 213.50h2.3M625.0 213.50h-2.3M125.0 221.84h2.3M625.0 221.84h-2.3M125.0 230.19h2.3M625.0 230.19h-2.3M125.0 238.53h2.3M625.0 238.53h-2.3M125.0 246.88h2.3M625.0 246.88h-2.3M125.0 255.22h2.3M625.0 255.22h-2.3M125.0 263.57h2.3M625.0 263.57h-2.3M125.0 271.91h2.3M625.0 271.91h-2.3M125.0 280.26h2.3M625.0 280.26h-2.3M125.0 288.60h2.3M625.0 288.60h-2.3M125.0 296.95h2.3M625.0 296.95h-2.3M125.0 305.30h2.3M625.0 305.30h-2.3M125.0 313.64h2.3M625.0 313.64h-2.3M125.0 321.98h2.3M625.0 321.98h-2.3M125.0 330.33h2.3M625.0 330.33h-2.3M125.0 338.67h2.3M625.0 338.67h-2.3M125.0 347.02h2.3M625.0 347.02h-2.3M125.0 355.37h2.3M625.0 355.37h-2.3M125.0 363.71h2.3M625.0 363.71h-2.3M125.0 372.06h2.3M625.0 372.06h-2.3" stroke="#8a8a8a" stroke-width="0.9"/><path d="M375.00 46.6V380.4M125.0 213.90H625.0" stroke="#5c5c5c" stroke-width="1"/><path d="M133.33 212.30v3.2M141.67 212.30v3.2M150.00 212.30v3.2M158.33 212.30v3.2M166.67 211.70v4.4M175.00 212.30v3.2M183.33 212.30v3.2M191.67 212.30v3.2M200.00 212.30v3.2M208.33 211.70v4.4M216.67 212.30v3.2M225.00 212.30v3.2M233.33 212.30v3.2M241.67 212.30v3.2M250.00 211.70v4.4M258.33 212.30v3.2M266.67 212.30v3.2M275.00 212.30v3.2M283.33 212.30v3.2M291.67 211.70v4.4M300.00 212.30v3.2M308.33 212.30v3.2M316.67 212.30v3.2M325.00 212.30v3.2M333.33 211.70v4.4M341.67 212.30v3.2M350.00 212.30v3.2M358.33 212.30v3.2M366.67 212.30v3.2M375.00 211.70v4.4M383.33 212.30v3.2M391.67 212.30v3.2M400.00 212.30v3.2M408.33 212.30v3.2M416.67 211.70v4.4M425.00 212.30v3.2M433.33 212.30v3.2M441.67 212.30v3.2M450.00 212.30v3.2M458.33 211.70v4.4M466.67 212.30v3.2M475.00 212.30v3.2M483.33 212.30v3.2M491.67 212.30v3.2M500.00 211.70v4.4M508.33 212.30v3.2M516.67 212.30v3.2M525.00 212.30v3.2M533.33 212.30v3.2M541.67 211.70v4.4M550.00 212.30v3.2M558.33 212.30v3.2M566.67 212.30v3.2M575.00 212.30v3.2M583.33 211.70v4.4M591.67 212.30v3.2M600.00 212.30v3.2M608.33 212.30v3.2M616.67 212.30v3.2M373.40 54.95h3.2M373.40 63.29h3.2M373.40 71.63h3.2M373.40 79.98h3.2M372.80 88.32h4.4M373.40 96.67h3.2M373.40 105.01h3.2M373.40 113.36h3.2M373.40 121.70h3.2M372.80 130.05h4.4M373.40 138.39h3.2M373.40 146.74h3.2M373.40 155.08h3.2M373.40 163.43h3.2M372.80 171.77h4.4M373.40 180.12h3.2M373.40 188.46h3.2M373.40 196.81h3.2M373.40 205.15h3.2M372.80 213.50h4.4M373.40 221.84h3.2M373.40 230.19h3.2M373.40 238.53h3.2M373.40 246.88h3.2M372.80 255.22h4.4M373.40 263.57h3.2M373.40 271.91h3.2M373.40 280.26h3.2M373.40 288.60h3.2M372.80 296.95h4.4M373.40 305.30h3.2M373.40 313.64h3.2M373.40 321.98h3.2M373.40 330.33h3.2M372.80 338.67h4.4M373.40 347.02h3.2M373.40 355.37h3.2M373.40 363.71h3.2M373.40 372.06h3.2" stroke="#8a8a8a" stroke-width="0.9"/><path d="M166.17 54.45h1v1h-1zM166.17 62.79h1v1h-1zM166.17 71.13h1v1h-1zM166.17 79.48h1v1h-1zM166.17 87.82h1v1h-1zM166.17 96.17h1v1h-1zM166.17 104.51h1v1h-1zM166.17 112.86h1v1h-1zM166.17 121.20h1v1h-1zM166.17 129.55h1v1h-1zM166.17 137.89h1v1h-1zM166.17 146.24h1v1h-1zM166.17 154.58h1v1h-1zM166.17 162.93h1v1h-1zM166.17 171.27h1v1h-1zM166.17 179.62h1v1h-1zM166.17 187.96h1v1h-1zM166.17 196.31h1v1h-1zM166.17 204.65h1v1h-1zM166.17 213.00h1v1h-1zM166.17 221.34h1v1h-1zM166.17 229.69h1v1h-1zM166.17 238.03h1v1h-1zM166.17 246.38h1v1h-1zM166.17 254.72h1v1h-1zM166.17 263.07h1v1h-1zM166.17 271.41h1v1h-1zM166.17 279.76h1v1h-1zM166.17 288.10h1v1h-1zM166.17 296.45h1v1h-1zM166.17 304.80h1v1h-1zM166.17 313.14h1v1h-1zM166.17 321.48h1v1h-1zM166.17 329.83h1v1h-1zM166.17 338.17h1v1h-1zM166.17 346.52h1v1h-1zM166.17 354.87h1v1h-1zM166.17 363.21h1v1h-1zM166.17 371.56h1v1h-1zM207.83 54.45h1v1h-1zM207.83 62.79h1v1h-1zM207.83 71.13h1v1h-1zM207.83 79.48h1v1h-1zM207.83 87.82h1v1h-1zM207.83 96.17h1v1h-1zM207.83 104.51h1v1h-1zM207.83 112.86h1v1h-1zM207.83 121.20h1v1h-1zM207.83 129.55h1v1h-1zM207.83 137.89h1v1h-1zM207.83 146.24h1v1h-1zM207.83 154.58h1v1h-1zM207.83 162.93h1v1h-1zM207.83 171.27h1v1h-1zM207.83 179.62h1v1h-1zM207.83 187.96h1v1h-1zM207.83 196.31h1v1h-1zM207.83 204.65h1v1h-1zM207.83 213.00h1v1h-1zM207.83 221.34h1v1h-1zM207.83 229.69h1v1h-1zM207.83 238.03h1v1h-1zM207.83 246.38h1v1h-1zM207.83 254.72h1v1h-1zM207.83 263.07h1v1h-1zM207.83 271.41h1v1h-1zM207.83 279.76h1v1h-1zM207.83 288.10h1v1h-1zM207.83 296.45h1v1h-1zM207.83 304.80h1v1h-1zM207.83 313.14h1v1h-1zM207.83 321.48h1v1h-1zM207.83 329.83h1v1h-1zM207.83 338.17h1v1h-1zM207.83 346.52h1v1h-1zM207.83 354.87h1v1h-1zM207.83 363.21h1v1h-1zM207.83 371.56h1v1h-1zM249.50 54.45h1v1h-1zM249.50 62.79h1v1h-1zM249.50 71.13h1v1h-1zM249.50 79.48h1v1h-1zM249.50 87.82h1v1h-1zM249.50 96.17h1v1h-1zM249.50 104.51h1v1h-1zM249.50 112.86h1v1h-1zM249.50 121.20h1v1h-1zM249.50 129.55h1v1h-1zM249.50 137.89h1v1h-1zM249.50 146.24h1v1h-1zM249.50 154.58h1v1h-1zM249.50 162.93h1v1h-1zM249.50 171.27h1v1h-1zM249.50 179.62h1v1h-1zM249.50 187.96h1v1h-1zM249.50 196.31h1v1h-1zM249.50 204.65h1v1h-1zM249.50 213.00h1v1h-1zM249.50 221.34h1v1h-1zM249.50 229.69h1v1h-1zM249.50 238.03h1v1h-1zM249.50 246.38h1v1h-1zM249.50 254.72h1v1h-1zM249.50 263.07h1v1h-1zM249.50 271.41h1v1h-1zM249.50 279.76h1v1h-1zM249.50 288.10h1v1h-1zM249.50 296.45h1v1h-1zM249.50 304.80h1v1h-1zM249.50 313.14h1v1h-1zM249.50 321.48h1v1h-1zM249.50 329.83h1v1h-1zM249.50 338.17h1v1h-1zM249.50 346.52h1v1h-1zM249.50 354.87h1v1h-1zM249.50 363.21h1v1h-1zM249.50 371.56h1v1h-1zM291.17 54.45h1v1h-1zM291.17 62.79h1v1h-1zM291.17 71.13h1v1h-1zM291.17 79.48h1v1h-1zM291.17 87.82h1v1h-1zM291.17 96.17h1v1h-1zM291.17 104.51h1v1h-1zM291.17 112.86h1v1h-1zM291.17 121.20h1v1h-1zM291.17 129.55h1v1h-1zM291.17 137.89h1v1h-1zM291.17 146.24h1v1h-1zM291.17 154.58h1v1h-1zM291.17 162.93h1v1h-1zM291.17 171.27h1v1h-1zM291.17 179.62h1v1h-1zM291.17 187.96h1v1h-1zM291.17 196.31h1v1h-1zM291.17 204.65h1v1h-1zM291.17 213.00h1v1h-1zM291.17 221.34h1v1h-1zM291.17 229.69h1v1h-1zM291.17 238.03h1v1h-1zM291.17 246.38h1v1h-1zM291.17 254.72h1v1h-1zM291.17 263.07h1v1h-1zM291.17 271.41h1v1h-1zM291.17 279.76h1v1h-1zM291.17 288.10h1v1h-1zM291.17 296.45h1v1h-1zM291.17 304.80h1v1h-1zM291.17 313.14h1v1h-1zM291.17 321.48h1v1h-1zM291.17 329.83h1v1h-1zM291.17 338.17h1v1h-1zM291.17 346.52h1v1h-1zM291.17 354.87h1v1h-1zM291.17 363.21h1v1h-1zM291.17 371.56h1v1h-1zM332.83 54.45h1v1h-1zM332.83 62.79h1v1h-1zM332.83 71.13h1v1h-1zM332.83 79.48h1v1h-1zM332.83 87.82h1v1h-1zM332.83 96.17h1v1h-1zM332.83 104.51h1v1h-1zM332.83 112.86h1v1h-1zM332.83 121.20h1v1h-1zM332.83 129.55h1v1h-1zM332.83 137.89h1v1h-1zM332.83 146.24h1v1h-1zM332.83 154.58h1v1h-1zM332.83 162.93h1v1h-1zM332.83 171.27h1v1h-1zM332.83 179.62h1v1h-1zM332.83 187.96h1v1h-1zM332.83 196.31h1v1h-1zM332.83 204.65h1v1h-1zM332.83 213.00h1v1h-1zM332.83 221.34h1v1h-1zM332.83 229.69h1v1h-1zM332.83 238.03h1v1h-1zM332.83 246.38h1v1h-1zM332.83 254.72h1v1h-1zM332.83 263.07h1v1h-1zM332.83 271.41h1v1h-1zM332.83 279.76h1v1h-1zM332.83 288.10h1v1h-1zM332.83 296.45h1v1h-1zM332.83 304.80h1v1h-1zM332.83 313.14h1v1h-1zM332.83 321.48h1v1h-1zM332.83 329.83h1v1h-1zM332.83 338.17h1v1h-1zM332.83 346.52h1v1h-1zM332.83 354.87h1v1h-1zM332.83 363.21h1v1h-1zM332.83 371.56h1v1h-1zM416.17 54.45h1v1h-1zM416.17 62.79h1v1h-1zM416.17 71.13h1v1h-1zM416.17 79.48h1v1h-1zM416.17 87.82h1v1h-1zM416.17 96.17h1v1h-1zM416.17 104.51h1v1h-1zM416.17 112.86h1v1h-1zM416.17 121.20h1v1h-1zM416.17 129.55h1v1h-1zM416.17 137.89h1v1h-1zM416.17 146.24h1v1h-1zM416.17 154.58h1v1h-1zM416.17 162.93h1v1h-1zM416.17 171.27h1v1h-1zM416.17 179.62h1v1h-1zM416.17 187.96h1v1h-1zM416.17 196.31h1v1h-1zM416.17 204.65h1v1h-1zM416.17 213.00h1v1h-1zM416.17 221.34h1v1h-1zM416.17 229.69h1v1h-1zM416.17 238.03h1v1h-1zM416.17 246.38h1v1h-1zM416.17 254.72h1v1h-1zM416.17 263.07h1v1h-1zM416.17 271.41h1v1h-1zM416.17 279.76h1v1h-1zM416.17 288.10h1v1h-1zM416.17 296.45h1v1h-1zM416.17 304.80h1v1h-1zM416.17 313.14h1v1h-1zM416.17 321.48h1v1h-1zM416.17 329.83h1v1h-1zM416.17 338.17h1v1h-1zM416.17 346.52h1v1h-1zM416.17 354.87h1v1h-1zM416.17 363.21h1v1h-1zM416.17 371.56h1v1h-1zM457.83 54.45h1v1h-1zM457.83 62.79h1v1h-1zM457.83 71.13h1v1h-1zM457.83 79.48h1v1h-1zM457.83 87.82h1v1h-1zM457.83 96.17h1v1h-1zM457.83 104.51h1v1h-1zM457.83 112.86h1v1h-1zM457.83 121.20h1v1h-1zM457.83 129.55h1v1h-1zM457.83 137.89h1v1h-1zM457.83 146.24h1v1h-1zM457.83 154.58h1v1h-1zM457.83 162.93h1v1h-1zM457.83 171.27h1v1h-1zM457.83 179.62h1v1h-1zM457.83 187.96h1v1h-1zM457.83 196.31h1v1h-1zM457.83 204.65h1v1h-1zM457.83 213.00h1v1h-1zM457.83 221.34h1v1h-1zM457.83 229.69h1v1h-1zM457.83 238.03h1v1h-1zM457.83 246.38h1v1h-1zM457.83 254.72h1v1h-1zM457.83 263.07h1v1h-1zM457.83 271.41h1v1h-1zM457.83 279.76h1v1h-1zM457.83 288.10h1v1h-1zM457.83 296.45h1v1h-1zM457.83 304.80h1v1h-1zM457.83 313.14h1v1h-1zM457.83 321.48h1v1h-1zM457.83 329.83h1v1h-1zM457.83 338.17h1v1h-1zM457.83 346.52h1v1h-1zM457.83 354.87h1v1h-1zM457.83 363.21h1v1h-1zM457.83 371.56h1v1h-1zM499.50 54.45h1v1h-1zM499.50 62.79h1v1h-1zM499.50 71.13h1v1h-1zM499.50 79.48h1v1h-1zM499.50 87.82h1v1h-1zM499.50 96.17h1v1h-1zM499.50 104.51h1v1h-1zM499.50 112.86h1v1h-1zM499.50 121.20h1v1h-1zM499.50 129.55h1v1h-1zM499.50 137.89h1v1h-1zM499.50 146.24h1v1h-1zM499.50 154.58h1v1h-1zM499.50 162.93h1v1h-1zM499.50 171.27h1v1h-1zM499.50 179.62h1v1h-1zM499.50 187.96h1v1h-1zM499.50 196.31h1v1h-1zM499.50 204.65h1v1h-1zM499.50 213.00h1v1h-1zM499.50 221.34h1v1h-1zM499.50 229.69h1v1h-1zM499.50 238.03h1v1h-1zM499.50 246.38h1v1h-1zM499.50 254.72h1v1h-1zM499.50 263.07h1v1h-1zM499.50 271.41h1v1h-1zM499.50 279.76h1v1h-1zM499.50 288.10h1v1h-1zM499.50 296.45h1v1h-1zM499.50 304.80h1v1h-1zM499.50 313.14h1v1h-1zM499.50 321.48h1v1h-1zM499.50 329.83h1v1h-1zM499.50 338.17h1v1h-1zM499.50 346.52h1v1h-1zM499.50 354.87h1v1h-1zM499.50 363.21h1v1h-1zM499.50 371.56h1v1h-1zM541.17 54.45h1v1h-1zM541.17 62.79h1v1h-1zM541.17 71.13h1v1h-1zM541.17 79.48h1v1h-1zM541.17 87.82h1v1h-1zM541.17 96.17h1v1h-1zM541.17 104.51h1v1h-1zM541.17 112.86h1v1h-1zM541.17 121.20h1v1h-1zM541.17 129.55h1v1h-1zM541.17 137.89h1v1h-1zM541.17 146.24h1v1h-1zM541.17 154.58h1v1h-1zM541.17 162.93h1v1h-1zM541.17 171.27h1v1h-1zM541.17 179.62h1v1h-1zM541.17 187.96h1v1h-1zM541.17 196.31h1v1h-1zM541.17 204.65h1v1h-1zM541.17 213.00h1v1h-1zM541.17 221.34h1v1h-1zM541.17 229.69h1v1h-1zM541.17 238.03h1v1h-1zM541.17 246.38h1v1h-1zM541.17 254.72h1v1h-1zM541.17 263.07h1v1h-1zM541.17 271.41h1v1h-1zM541.17 279.76h1v1h-1zM541.17 288.10h1v1h-1zM541.17 296.45h1v1h-1zM541.17 304.80h1v1h-1zM541.17 313.14h1v1h-1zM541.17 321.48h1v1h-1zM541.17 329.83h1v1h-1zM541.17 338.17h1v1h-1zM541.17 346.52h1v1h-1zM541.17 354.87h1v1h-1zM541.17 363.21h1v1h-1zM541.17 371.56h1v1h-1zM582.83 54.45h1v1h-1zM582.83 62.79h1v1h-1zM582.83 71.13h1v1h-1zM582.83 79.48h1v1h-1zM582.83 87.82h1v1h-1zM582.83 96.17h1v1h-1zM582.83 104.51h1v1h-1zM582.83 112.86h1v1h-1zM582.83 121.20h1v1h-1zM582.83 129.55h1v1h-1zM582.83 137.89h1v1h-1zM582.83 146.24h1v1h-1zM582.83 154.58h1v1h-1zM582.83 162.93h1v1h-1zM582.83 171.27h1v1h-1zM582.83 179.62h1v1h-1zM582.83 187.96h1v1h-1zM582.83 196.31h1v1h-1zM582.83 204.65h1v1h-1zM582.83 213.00h1v1h-1zM582.83 221.34h1v1h-1zM582.83 229.69h1v1h-1zM582.83 238.03h1v1h-1zM582.83 246.38h1v1h-1zM582.83 254.72h1v1h-1zM582.83 263.07h1v1h-1zM582.83 271.41h1v1h-1zM582.83 279.76h1v1h-1zM582.83 288.10h1v1h-1zM582.83 296.45h1v1h-1zM582.83 304.80h1v1h-1zM582.83 313.14h1v1h-1zM582.83 321.48h1v1h-1zM582.83 329.83h1v1h-1zM582.83 338.17h1v1h-1zM582.83 346.52h1v1h-1zM582.83 354.87h1v1h-1zM582.83 363.21h1v1h-1zM582.83 371.56h1v1h-1zM132.83 87.82h1v1h-1zM141.17 87.82h1v1h-1zM149.50 87.82h1v1h-1zM157.83 87.82h1v1h-1zM174.50 87.82h1v1h-1zM182.83 87.82h1v1h-1zM191.17 87.82h1v1h-1zM199.50 87.82h1v1h-1zM216.17 87.82h1v1h-1zM224.50 87.82h1v1h-1zM232.83 87.82h1v1h-1zM241.17 87.82h1v1h-1zM257.83 87.82h1v1h-1zM266.17 87.82h1v1h-1zM274.50 87.82h1v1h-1zM282.83 87.82h1v1h-1zM299.50 87.82h1v1h-1zM307.83 87.82h1v1h-1zM316.17 87.82h1v1h-1zM324.50 87.82h1v1h-1zM341.17 87.82h1v1h-1zM349.50 87.82h1v1h-1zM357.83 87.82h1v1h-1zM366.17 87.82h1v1h-1zM382.83 87.82h1v1h-1zM391.17 87.82h1v1h-1zM399.50 87.82h1v1h-1zM407.83 87.82h1v1h-1zM424.50 87.82h1v1h-1zM432.83 87.82h1v1h-1zM441.17 87.82h1v1h-1zM449.50 87.82h1v1h-1zM466.17 87.82h1v1h-1zM474.50 87.82h1v1h-1zM482.83 87.82h1v1h-1zM491.17 87.82h1v1h-1zM507.83 87.82h1v1h-1zM516.17 87.82h1v1h-1zM524.50 87.82h1v1h-1zM532.83 87.82h1v1h-1zM549.50 87.82h1v1h-1zM557.83 87.82h1v1h-1zM566.17 87.82h1v1h-1zM574.50 87.82h1v1h-1zM591.17 87.82h1v1h-1zM599.50 87.82h1v1h-1zM607.83 87.82h1v1h-1zM616.17 87.82h1v1h-1zM132.83 129.55h1v1h-1zM141.17 129.55h1v1h-1zM149.50 129.55h1v1h-1zM157.83 129.55h1v1h-1zM174.50 129.55h1v1h-1zM182.83 129.55h1v1h-1zM191.17 129.55h1v1h-1zM199.50 129.55h1v1h-1zM216.17 129.55h1v1h-1zM224.50 129.55h1v1h-1zM232.83 129.55h1v1h-1zM241.17 129.55h1v1h-1zM257.83 129.55h1v1h-1zM266.17 129.55h1v1h-1zM274.50 129.55h1v1h-1zM282.83 129.55h1v1h-1zM299.50 129.55h1v1h-1zM307.83 129.55h1v1h-1zM316.17 129.55h1v1h-1zM324.50 129.55h1v1h-1zM341.17 129.55h1v1h-1zM349.50 129.55h1v1h-1zM357.83 129.55h1v1h-1zM366.17 129.55h1v1h-1zM382.83 129.55h1v1h-1zM391.17 129.55h1v1h-1zM399.50 129.55h1v1h-1zM407.83 129.55h1v1h-1zM424.50 129.55h1v1h-1zM432.83 129.55h1v1h-1zM441.17 129.55h1v1h-1zM449.50 129.55h1v1h-1zM466.17 129.55h1v1h-1zM474.50 129.55h1v1h-1zM482.83 129.55h1v1h-1zM491.17 129.55h1v1h-1zM507.83 129.55h1v1h-1zM516.17 129.55h1v1h-1zM524.50 129.55h1v1h-1zM532.83 129.55h1v1h-1zM549.50 129.55h1v1h-1zM557.83 129.55h1v1h-1zM566.17 129.55h1v1h-1zM574.50 129.55h1v1h-1zM591.17 129.55h1v1h-1zM599.50 129.55h1v1h-1zM607.83 129.55h1v1h-1zM616.17 129.55h1v1h-1zM132.83 171.27h1v1h-1zM141.17 171.27h1v1h-1zM149.50 171.27h1v1h-1zM157.83 171.27h1v1h-1zM174.50 171.27h1v1h-1zM182.83 171.27h1v1h-1zM191.17 171.27h1v1h-1zM199.50 171.27h1v1h-1zM216.17 171.27h1v1h-1zM224.50 171.27h1v1h-1zM232.83 171.27h1v1h-1zM241.17 171.27h1v1h-1zM257.83 171.27h1v1h-1zM266.17 171.27h1v1h-1zM274.50 171.27h1v1h-1zM282.83 171.27h1v1h-1zM299.50 171.27h1v1h-1zM307.83 171.27h1v1h-1zM316.17 171.27h1v1h-1zM324.50 171.27h1v1h-1zM341.17 171.27h1v1h-1zM349.50 171.27h1v1h-1zM357.83 171.27h1v1h-1zM366.17 171.27h1v1h-1zM382.83 171.27h1v1h-1zM391.17 171.27h1v1h-1zM399.50 171.27h1v1h-1zM407.83 171.27h1v1h-1zM424.50 171.27h1v1h-1zM432.83 171.27h1v1h-1zM441.17 171.27h1v1h-1zM449.50 171.27h1v1h-1zM466.17 171.27h1v1h-1zM474.50 171.27h1v1h-1zM482.83 171.27h1v1h-1zM491.17 171.27h1v1h-1zM507.83 171.27h1v1h-1zM516.17 171.27h1v1h-1zM524.50 171.27h1v1h-1zM532.83 171.27h1v1h-1zM549.50 171.27h1v1h-1zM557.83 171.27h1v1h-1zM566.17 171.27h1v1h-1zM574.50 171.27h1v1h-1zM591.17 171.27h1v1h-1zM599.50 171.27h1v1h-1zM607.83 171.27h1v1h-1zM616.17 171.27h1v1h-1zM132.83 254.72h1v1h-1zM141.17 254.72h1v1h-1zM149.50 254.72h1v1h-1zM157.83 254.72h1v1h-1zM174.50 254.72h1v1h-1zM182.83 254.72h1v1h-1zM191.17 254.72h1v1h-1zM199.50 254.72h1v1h-1zM216.17 254.72h1v1h-1zM224.50 254.72h1v1h-1zM232.83 254.72h1v1h-1zM241.17 254.72h1v1h-1zM257.83 254.72h1v1h-1zM266.17 254.72h1v1h-1zM274.50 254.72h1v1h-1zM282.83 254.72h1v1h-1zM299.50 254.72h1v1h-1zM307.83 254.72h1v1h-1zM316.17 254.72h1v1h-1zM324.50 254.72h1v1h-1zM341.17 254.72h1v1h-1zM349.50 254.72h1v1h-1zM357.83 254.72h1v1h-1zM366.17 254.72h1v1h-1zM382.83 254.72h1v1h-1zM391.17 254.72h1v1h-1zM399.50 254.72h1v1h-1zM407.83 254.72h1v1h-1zM424.50 254.72h1v1h-1zM432.83 254.72h1v1h-1zM441.17 254.72h1v1h-1zM449.50 254.72h1v1h-1zM466.17 254.72h1v1h-1zM474.50 254.72h1v1h-1zM482.83 254.72h1v1h-1zM491.17 254.72h1v1h-1zM507.83 254.72h1v1h-1zM516.17 254.72h1v1h-1zM524.50 254.72h1v1h-1zM532.83 254.72h1v1h-1zM549.50 254.72h1v1h-1zM557.83 254.72h1v1h-1zM566.17 254.72h1v1h-1zM574.50 254.72h1v1h-1zM591.17 254.72h1v1h-1zM599.50 254.72h1v1h-1zM607.83 254.72h1v1h-1zM616.17 254.72h1v1h-1zM132.83 296.45h1v1h-1zM141.17 296.45h1v1h-1zM149.50 296.45h1v1h-1zM157.83 296.45h1v1h-1zM174.50 296.45h1v1h-1zM182.83 296.45h1v1h-1zM191.17 296.45h1v1h-1zM199.50 296.45h1v1h-1zM216.17 296.45h1v1h-1zM224.50 296.45h1v1h-1zM232.83 296.45h1v1h-1zM241.17 296.45h1v1h-1zM257.83 296.45h1v1h-1zM266.17 296.45h1v1h-1zM274.50 296.45h1v1h-1zM282.83 296.45h1v1h-1zM299.50 296.45h1v1h-1zM307.83 296.45h1v1h-1zM316.17 296.45h1v1h-1zM324.50 296.45h1v1h-1zM341.17 296.45h1v1h-1zM349.50 296.45h1v1h-1zM357.83 296.45h1v1h-1zM366.17 296.45h1v1h-1zM382.83 296.45h1v1h-1zM391.17 296.45h1v1h-1zM399.50 296.45h1v1h-1zM407.83 296.45h1v1h-1zM424.50 296.45h1v1h-1zM432.83 296.45h1v1h-1zM441.17 296.45h1v1h-1zM449.50 296.45h1v1h-1zM466.17 296.45h1v1h-1zM474.50 296.45h1v1h-1zM482.83 296.45h1v1h-1zM491.17 296.45h1v1h-1zM507.83 296.45h1v1h-1zM516.17 296.45h1v1h-1zM524.50 296.45h1v1h-1zM532.83 296.45h1v1h-1zM549.50 296.45h1v1h-1zM557.83 296.45h1v1h-1zM566.17 296.45h1v1h-1zM574.50 296.45h1v1h-1zM591.17 296.45h1v1h-1zM599.50 296.45h1v1h-1zM607.83 296.45h1v1h-1zM616.17 296.45h1v1h-1zM132.83 338.17h1v1h-1zM141.17 338.17h1v1h-1zM149.50 338.17h1v1h-1zM157.83 338.17h1v1h-1zM174.50 338.17h1v1h-1zM182.83 338.17h1v1h-1zM191.17 338.17h1v1h-1zM199.50 338.17h1v1h-1zM216.17 338.17h1v1h-1zM224.50 338.17h1v1h-1zM232.83 338.17h1v1h-1zM241.17 338.17h1v1h-1zM257.83 338.17h1v1h-1zM266.17 338.17h1v1h-1zM274.50 338.17h1v1h-1zM282.83 338.17h1v1h-1zM299.50 338.17h1v1h-1zM307.83 338.17h1v1h-1zM316.17 338.17h1v1h-1zM324.50 338.17h1v1h-1zM341.17 338.17h1v1h-1zM349.50 338.17h1v1h-1zM357.83 338.17h1v1h-1zM366.17 338.17h1v1h-1zM382.83 338.17h1v1h-1zM391.17 338.17h1v1h-1zM399.50 338.17h1v1h-1zM407.83 338.17h1v1h-1zM424.50 338.17h1v1h-1zM432.83 338.17h1v1h-1zM441.17 338.17h1v1h-1zM449.50 338.17h1v1h-1zM466.17 338.17h1v1h-1zM474.50 338.17h1v1h-1zM482.83 338.17h1v1h-1zM491.17 338.17h1v1h-1zM507.83 338.17h1v1h-1zM516.17 338.17h1v1h-1zM524.50 338.17h1v1h-1zM532.83 338.17h1v1h-1zM549.50 338.17h1v1h-1zM557.83 338.17h1v1h-1zM566.17 338.17h1v1h-1zM574.50 338.17h1v1h-1zM591.17 338.17h1v1h-1zM599.50 338.17h1v1h-1zM607.83 338.17h1v1h-1zM616.17 338.17h1v1h-1z" fill="#505050"/><polyline points="125.5,75.5 175.5,75.5 176.3,76.8 177.1,75.5 180.2,75.5 180.9,213.6 189.9,213.6 190.6,75.5 198.1,75.5 198.8,213.6 233.5,213.6 234.2,75.5 249.2,75.5 249.9,213.6 259.2,213.6 259.9,75.5 596.5,75.5 597.3,76.8 598.1,75.5 624.5,75.5" fill="none" stroke="#a8a000" stroke-width="0.95" stroke-linejoin="miter"/><path d="M236.2 75.5L237.0 76.6L237.8 75.5" fill="none" stroke="#aca400" stroke-width=".8"/><path d="M241.2 75.5L242.0 76.6L242.8 75.5" fill="none" stroke="#aca400" stroke-width=".8"/><path d="M263.5 75.5L264.3 76.6L265.1 75.5" fill="none" stroke="#aca400" stroke-width=".8"/><path d="M183 213.6L184.0 213.0L185.5 213.6L187.0 213.0L188.5 212.6L190.0 213.6" fill="none" stroke="#aca400" stroke-width=".8"/><path d="M201 213.6L202.0 213.6L203.5 212.6L205.0 213.6L206.5 213.0L208.0 212.6L209.5 213.6L211.0 212.6L212.5 213.6L214.0 213.6L215.5 213.6L217.0 213.0L218.5 213.0L220.0 213.6L221.5 213.6L223.0 213.6L224.5 212.6L226.0 213.0L227.5 213.6L229.0 212.6L230.5 213.6L232.0 213.6" fill="none" stroke="#aca400" stroke-width=".8"/><path d="M252 213.6L253.0 212.6L254.5 212.6L256.0 212.6L257.5 213.6" fill="none" stroke="#aca400" stroke-width=".8"/><polyline points="125.8,223.3 127.3,224.4 128.8,224.7 130.3,224.4 131.8,224.1 133.3,225.0 134.8,223.3 136.3,224.1 137.8,224.4 139.3,225.0 140.8,224.1 142.3,224.4 143.8,224.7 145.3,222.8 146.8,224.4 148.3,224.4 149.8,224.4 151.3,224.7 152.8,225.3 154.3,223.3 155.8,222.8 157.3,225.3 158.8,225.3 160.3,222.8 161.8,225.0 163.3,224.7 164.8,224.1 166.3,224.7 167.8,224.4 169.3,225.0 170.8,225.3 172.3,222.8 173.8,225.3 175.3,225.0 176.8,224.4 178.3,224.4 179.8,223.3 181.3,224.1 182.8,222.8 184.3,224.1 185.8,225.3 187.3,223.3 188.8,224.4 190.3,224.4 191.8,222.8 193.3,222.8 194.8,222.8 196.3,225.3 197.8,225.3 199.3,224.4 200.8,224.4 202.3,225.0 203.8,225.3 205.3,224.4 206.8,224.4 208.3,225.0 209.8,225.3 211.3,225.0 212.8,223.3 214.3,222.8 215.8,224.4 217.3,225.3 218.8,222.8 220.3,224.1 221.8,224.4 223.3,225.3 224.8,224.4 226.3,224.7 227.8,225.0 229.3,224.1 230.8,224.7 232.3,223.3 233.8,223.3 235.3,225.3 236.8,224.4 238.3,224.1 239.8,225.3 241.3,223.3 242.8,225.0 244.3,224.1 245.8,223.3 247.3,225.0 248.8,223.3 250.3,222.8 251.8,223.3 253.3,224.7 254.8,224.1 256.3,224.4 257.8,224.1 259.3,224.1 260.8,224.7 262.3,224.7 263.8,224.4 265.3,225.3 266.8,224.1 268.3,225.0 269.8,225.0 271.3,224.4 272.8,224.1 274.3,223.3 275.8,222.8 277.3,222.8 278.8,224.1 280.3,224.4 281.8,225.3 283.3,223.3 284.8,223.3 286.3,223.3 287.8,223.3 289.3,224.4 290.8,225.3 292.3,223.3 293.8,224.4 295.3,224.7 296.8,224.4 298.3,224.7 299.8,225.3 301.3,224.1 302.8,224.4 304.3,222.8 305.8,224.4 307.3,224.4 308.8,224.4 310.3,224.1 311.8,224.4 313.3,222.8 314.8,224.4 316.3,224.4 317.8,224.7 319.3,223.3 320.8,224.1 322.3,225.0 323.8,222.8 325.3,222.8 326.8,225.3 328.3,224.4 329.8,224.4 331.3,225.3 332.8,225.3 334.3,225.3 335.8,225.3 337.3,225.0 338.8,224.4 340.3,224.1 341.8,224.4 343.3,222.8 344.8,225.0 346.3,225.3 348.2,224.4 348.9,362.2 349.9,361.9 351.4,362.2 352.9,362.5 354.4,360.6 355.9,361.9 357.4,362.2 358.9,362.8 360.4,362.2 361.9,362.8 363.4,360.6 365.3,362.2 366.0,224.4 367.0,224.1 368.5,222.8 370.0,224.7 371.5,222.8 373.0,224.7 374.5,224.7 376.0,224.7 377.5,223.3 379.0,224.7 380.5,224.7 382.0,225.3 383.5,222.8 385.0,224.4 386.5,224.4 388.0,225.0 389.5,225.3 391.5,224.4 392.2,362.2 393.2,362.8 394.7,362.5 396.2,360.6 397.7,363.1 399.2,360.6 400.7,360.6 402.2,362.2 403.7,362.5 405.2,362.2 406.7,362.5 408.2,363.1 410.2,362.2 410.9,224.4 411.9,224.7 413.4,222.8 414.9,224.7 416.4,225.3 418.5,224.4 419.2,362.2 420.2,362.2 421.7,363.1 423.2,360.6 424.7,362.2 426.2,362.2 428.1,362.2 428.8,224.4 429.8,223.3 431.3,224.7 432.8,225.3 434.3,224.1 435.8,223.3 437.3,222.8 438.8,224.4 440.3,223.3 441.8,225.3 443.3,223.3 444.8,224.4 446.3,224.1 447.8,224.1 449.3,224.1 450.8,224.4 452.3,224.1 453.8,225.3 455.3,224.1 456.8,225.3 458.3,222.8 459.8,224.1 461.3,224.1 462.8,224.4 464.3,224.4 465.8,224.4 467.3,224.1 468.8,223.3 470.3,224.7 471.8,224.7 473.3,224.4 474.8,225.0 476.3,224.7 477.8,225.0 479.3,224.7 480.8,222.8 482.3,225.0 483.8,223.3 485.3,224.1 486.8,224.4 488.3,222.8 489.8,225.3 491.3,223.3 492.8,224.1 494.3,224.1 495.8,224.4 497.3,225.3 498.8,224.1 500.3,224.4 501.8,224.1 503.3,224.1 504.8,224.1 506.3,225.3 507.8,224.4 509.3,224.4 510.8,222.8 512.3,225.3 513.8,224.4 515.3,224.4 516.8,224.7 518.3,224.7 519.8,225.0 521.3,224.4 522.8,224.4 524.3,225.3 525.8,224.4 527.3,224.4 528.8,225.3 530.3,222.8 531.8,224.7 533.3,225.0 534.8,225.3 536.3,225.3 537.8,224.7 539.3,225.0 540.8,224.7 542.3,225.3 543.8,224.1 545.3,223.3 546.8,224.4 548.3,223.3 549.8,225.3 551.3,222.8 552.8,224.4 554.3,224.7 555.8,223.3 557.3,224.4 558.8,224.7 560.3,225.0 561.8,224.4 563.3,224.1 564.8,222.8 566.3,224.1 567.8,225.0 569.3,224.1 570.8,225.3 572.3,224.7 573.8,224.4 575.3,223.3 576.8,225.3 578.3,224.1 579.8,224.7 581.3,224.1 582.8,223.3 584.3,223.3 585.8,222.8 587.3,223.3 588.8,224.7 590.3,222.8 591.8,222.8 593.3,224.4 594.8,222.8 596.3,224.4 597.8,222.8 599.3,225.3 600.8,225.3 602.3,224.4 603.8,223.3 605.3,222.8 606.8,225.0 608.3,224.4 609.8,224.4 611.3,224.7 612.8,224.4 614.3,224.4 615.8,225.0 617.3,225.0 618.8,224.4 620.3,224.1 621.8,225.0 623.3,224.1 624.5,224.4" fill="none" stroke="#10a49c" stroke-width="1.05"/><path d="M124.6 44.9H140.6" stroke="#906010" stroke-width="0.9"/><rect x="132" y="44.2" width="1.4" height="1.4" fill="#d83020"/><path d="M374 46.6H376.4L375.2 48.2Z" fill="#e06028"/><path d="M179 48.6H184.2V53.6L181.6 55 179 53.6Z" fill="#a84a08"/><path d="M180.2 49.9h2.8M181.6 49.9v4" stroke="#1a0800" stroke-width=".8"/><path d="M116.6 211.7h5.2l1.9 2.1-1.9 2.1h-5.2z" fill="none" stroke="#b4ac00" stroke-width=".9"/><path d="M118.3 212.8h1.5M118.3 214.8h1.5" stroke="#b4ac00" stroke-width=".6"/><path d="M116.6 358.5h5.2l1.9 2.1-1.9 2.1h-5.2z" fill="none" stroke="#10a49c" stroke-width=".9"/><path d="M118.3 359.6h1.5M118.3 361.6h1.5" stroke="#10a49c" stroke-width=".6"/></svg>
<div class="t" style="left:125px;top:386px;font-size:5px;letter-spacing:-0.05px;color:#c8c000;font-weight:bold">CH1 100mV</div>
<div class="t" style="left:250px;top:386px;font-size:5px;letter-spacing:-0.05px;color:#10b8b8;font-weight:bold">CH2 100mV</div>
<div class="t" style="left:375px;top:386px;font-size:5px;letter-spacing:-0.08px;color:#f0f0f0;font-weight:bold">500.0us</div>
<div class="t" style="left:458px;top:387px;font-size:4.6px;letter-spacing:-0.2px;color:#e07818">Delay:2.320ms</div>
<div class="a" style="left:690px;top:43.8px;width:7.4px;height:354.7px;background:#fdfdfb"></div>
<div class="a" style="left:690.2px;top:76.8px;width:6.6px;height:157.8px;background:linear-gradient(90deg,#f4f2e8,#e8e5d6);border-right:0.6px solid #d0ccb8;border-bottom:0.6px solid #c8c4b0;border-radius:0.8px"></div>
<div class="a" style="left:690px;top:44.2px;width:6.6px;height:6.2px;background:linear-gradient(135deg,#f4f2e8,#e4e1d0);border:0.5px solid #f8f6ee;border-right-color:#d0ccb8;border-bottom-color:#d0ccb8;border-radius:0.6px"></div>
<svg class="a" style="left:690px;top:44.2px" width="6.6" height="6.2" viewBox="0 0 6.6 6.2"><path d="M1.7999999999999998 3.9000000000000004L3.3 2.3L4.8 3.9000000000000004Z" fill="#101010"/></svg>
<div class="a" style="left:690.5px;top:392.3px;width:6.5px;height:6px;background:linear-gradient(135deg,#f4f2e8,#e4e1d0);border:0.5px solid #f8f6ee;border-right-color:#d0ccb8;border-bottom-color:#d0ccb8;border-radius:0.6px"></div>
<svg class="a" style="left:690.5px;top:392.3px" width="6.5" height="6" viewBox="0 0 6.5 6"><path d="M1.75 2.2L3.25 3.8L4.75 2.2Z" fill="#101010"/></svg>
<div class="a" style="left:114px;top:398.5px;width:576px;height:6.7px;background:#fdfdfb"></div>
<div class="a" style="left:120.6px;top:398.6px;width:282px;height:6.8px;background:linear-gradient(#f6f4ea,#e8e5d6);border-right:0.8px solid #c0bca8;border-bottom:0.6px solid #c8c4b0;border-radius:0.8px"></div>
<div class="a" style="left:114.4px;top:399px;width:6px;height:6px;background:linear-gradient(135deg,#f4f2e8,#e4e1d0);border:0.5px solid #f8f6ee;border-right-color:#d0ccb8;border-bottom-color:#d0ccb8;border-radius:0.6px"></div>
<svg class="a" style="left:114.4px;top:399px" width="6" height="6" viewBox="0 0 6 6"><path d="M3.8 1.5L2.2 3.0L3.8 4.5Z" fill="#101010"/></svg>
<div class="a" style="left:683.6px;top:399px;width:6px;height:6px;background:linear-gradient(135deg,#f4f2e8,#e4e1d0);border:0.5px solid #f8f6ee;border-right-color:#d0ccb8;border-bottom-color:#d0ccb8;border-radius:0.6px"></div>
<svg class="a" style="left:683.6px;top:399px" width="6" height="6" viewBox="0 0 6 6"><path d="M2.2 1.5L3.8 3.0L2.2 4.5Z" fill="#101010"/></svg>
<div class="a" style="left:690px;top:398.5px;width:7.4px;height:6.7px;background:#000"></div>
<div class="a" style="left:112.8px;top:52px;width:0.7px;height:353px;background:#dcd8c8"></div>
<svg class="a" style="left:84px;top:42px" width="9.5" height="9.5" viewBox="0 0 9.5 9.5"><rect x="0" y="0" width="9.5" height="9.5" fill="#58b8cc"/><rect x=".3" y=".3" width="8.9" height="8.9" fill="none" stroke="#60d8a0" stroke-width=".5" stroke-dasharray=".6 .6"/><path d="M1.8 1.8L2.8 5.6 5 7.8" stroke="#0818f0" stroke-width="2" fill="none"/><path d="M5.3 7.5V2.3L8 2.6V8" stroke="#7850b0" stroke-width="1.6" fill="none"/></svg>
<div class="t" style="left:93.8px;top:46px;font-size:4.9px;letter-spacing:-0.28px;color:#202020">Refresh</div>
<div class="t" style="left:87.5px;top:55px;font-size:4.6px;letter-spacing:-0.22px;color:#202020">Refresh</div>
<div class="a" style="left:105.5px;top:58.3px;width:7.0px;height:0.7px;background:#d6d2c0"></div>
<div class="a" style="left:86px;top:61.2px;width:25.700000000000003px;height:30.799999999999997px;border:0.7px solid #d8d4c4;border-right-color:#f8f8f4;border-bottom-color:#f8f8f4"></div>
<svg class="a" style="left:86.8px;top:64.0px" width="4.6" height="4.6" viewBox="0 0 4.6 4.6"><rect x=".3" y=".3" width="4" height="4" fill="#fff"/><path d="M.4 4.2V.4H4.2" fill="none" stroke="#8c8c84" stroke-width=".7"/><path d="M1 1.3V3.6" stroke="#d8d8d0" stroke-width=".4"/><path d="M1.1 2.1L2 3.1 3.6 1.1" stroke="#181818" stroke-width=".95" fill="none"/></svg>
<div class="t" style="left:94px;top:66px;font-size:4.6px;letter-spacing:-0.22px;color:#202020">CH1</div>
<svg class="a" style="left:86.8px;top:74.4px" width="4.6" height="4.6" viewBox="0 0 4.6 4.6"><rect x=".3" y=".3" width="4" height="4" fill="#fff"/><path d="M.4 4.2V.4H4.2" fill="none" stroke="#8c8c84" stroke-width=".7"/><path d="M1 1.3V3.6" stroke="#d8d8d0" stroke-width=".4"/><path d="M1.1 2.1L2 3.1 3.6 1.1" stroke="#181818" stroke-width=".95" fill="none"/></svg>
<div class="t" style="left:94px;top:76px;font-size:4.6px;letter-spacing:-0.22px;color:#202020">CH2</div>
<svg class="a" style="left:86.8px;top:84.0px" width="4.6" height="4.6" viewBox="0 0 4.6 4.6"><path d="M.4 4.2V.4H4.2" fill="none" stroke="#c0bcac" stroke-width=".7"/><path d="M.9 4.1H4.1V.9" fill="none" stroke="#f8f8f4" stroke-width=".6"/></svg>
<div class="t" style="left:94px;top:85px;font-size:4.6px;letter-spacing:-0.22px;color:#c0c0b0">Math</div>
<div class="a" style="left:86px;top:93.6px;width:26.5px;height:0.7px;background:#d6d2c0"></div>
<div class="t" style="left:87px;top:97px;font-size:4.6px;letter-spacing:-0.22px;color:#202020">Display</div>
<div class="a" style="left:103px;top:100.3px;width:9.5px;height:0.7px;background:#d6d2c0"></div>
<div class="t" style="left:88.5px;top:104px;font-size:4.6px;letter-spacing:-0.22px;color:#202020">Zoom</div>
<div class="a" style="left:85.8px;top:109.2px;width:20.4px;height:7.8px;background:#fff;border:0.7px solid #f8f8f4;border-top-color:#9c9c94;border-left-color:#9c9c94"></div>
<div class="t" style="left:86.3px;top:112px;font-size:4.5px;letter-spacing:-0.3px;color:#101010">400%</div>
<div class="a" style="left:100.2px;top:110px;width:5.4px;height:6.3px;background:#ece9d8;border:0.5px solid #fff;border-right-color:#a8a498;border-bottom-color:#a8a498"></div>
<svg class="a" style="left:100.2px;top:110px" width="5.4" height="6.3" viewBox="0 0 5.4 6.3"><path d="M1.2 2.6H4.2L2.7 4.3Z" fill="#000"/></svg>
<svg class="a" style="left:86.8px;top:119.4px" width="4.6" height="4.6" viewBox="0 0 4.6 4.6"><rect x=".3" y=".3" width="4" height="4" fill="#fff"/><path d="M.4 4.2V.4H4.2" fill="none" stroke="#8c8c84" stroke-width=".7"/><path d="M1 1.3V3.6" stroke="#d8d8d0" stroke-width=".4"/></svg>
<div class="t" style="left:94.5px;top:121px;font-size:4.6px;letter-spacing:-0.22px;color:#202020">Best Fit</div>
<div class="a" style="left:86px;top:126.3px;width:26.5px;height:0.7px;background:#d6d2c0"></div>
<svg class="a" style="left:86.8px;top:131.1px" width="4.6" height="4.6" viewBox="0 0 4.6 4.6"><circle cx="2.3" cy="2.3" r="2" fill="#fff"/><path d="M.5 3.3A2 2 0 0 1 3.5 .6" fill="none" stroke="#8c8c84" stroke-width=".7"/><circle cx="2.3" cy="2.3" r=".9" fill="#181818"/></svg>
<div class="t" style="left:94px;top:133px;font-size:4.6px;letter-spacing:-0.22px;color:#202020">Color</div>
<svg class="a" style="left:86.8px;top:139.29999999999998px" width="4.6" height="4.6" viewBox="0 0 4.6 4.6"><circle cx="2.3" cy="2.3" r="2" fill="#fff"/><path d="M.5 3.3A2 2 0 0 1 3.5 .6" fill="none" stroke="#8c8c84" stroke-width=".7"/></svg>
<div class="t" style="left:94px;top:141px;font-size:4.6px;letter-spacing:-0.22px;color:#202020">B/W</div>
<svg class="a" style="left:86.8px;top:147.29999999999998px" width="4.6" height="4.6" viewBox="0 0 4.6 4.6"><rect x=".3" y=".3" width="4" height="4" fill="#fff"/><path d="M.4 4.2V.4H4.2" fill="none" stroke="#8c8c84" stroke-width=".7"/><path d="M1 1.3V3.6" stroke="#d8d8d0" stroke-width=".4"/><path d="M1.1 2.1L2 3.1 3.6 1.1" stroke="#181818" stroke-width=".95" fill="none"/></svg>
<div class="t" style="left:94px;top:149px;font-size:4.6px;letter-spacing:-0.22px;color:#202020">Grid</div>
<div class="a" style="left:86px;top:153.6px;width:26.5px;height:0.7px;background:#d6d2c0"></div>
<div class="t" style="left:87px;top:158px;font-size:4.6px;letter-spacing:-0.22px;color:#202020">Cursor</div>
<div class="a" style="left:100px;top:161.3px;width:12.5px;height:0.7px;background:#d6d2c0"></div>
<svg class="a" style="left:85.8px;top:164.5px" width="4.6" height="4.6" viewBox="0 0 4.6 4.6"><rect x=".3" y=".3" width="4" height="4" fill="#fff"/><path d="M.4 4.2V.4H4.2" fill="none" stroke="#8c8c84" stroke-width=".7"/><path d="M1 1.3V3.6" stroke="#d8d8d0" stroke-width=".4"/></svg>
<div class="t" style="left:92px;top:166px;font-size:4.6px;letter-spacing:-0.22px;color:#202020">CursorX</div>
<svg class="a" style="left:85.8px;top:173.29999999999998px" width="4.6" height="4.6" viewBox="0 0 4.6 4.6"><rect x=".3" y=".3" width="4" height="4" fill="#fff"/><path d="M.4 4.2V.4H4.2" fill="none" stroke="#8c8c84" stroke-width=".7"/><path d="M1 1.3V3.6" stroke="#d8d8d0" stroke-width=".4"/></svg>
<div class="t" style="left:92px;top:175px;font-size:4.6px;letter-spacing:-0.22px;color:#202020">CursorY</div>
<div class="a" style="left:86px;top:181.2px;width:26.5px;height:0.7px;background:#d6d2c0"></div>
<div class="t" style="left:87px;top:185px;font-size:4.6px;letter-spacing:-0.22px;color:#202020">Output</div>
<div class="a" style="left:101px;top:188px;width:11.5px;height:0.7px;background:#d6d2c0"></div>
<svg class="a" style="left:85.8px;top:191px" width="6" height="6.2" viewBox="0 0 6 6.2"><rect x=".2" y=".2" width="5.6" height="5.8" fill="#0c2a70" stroke="#2860c0" stroke-width=".4"/><path d="M1 1.5H4.5V3.2" stroke="#30c060" stroke-width=".7" fill="none"/><path d="M1.5 4.5H4.5" stroke="#a0c0f0" stroke-width=".5"/></svg>
<div class="t" style="left:96px;top:193px;font-size:4.6px;letter-spacing:-0.22px;color:#202020">Export</div>
<svg class="a" style="left:85.8px;top:200.2px" width="6.5" height="6" viewBox="0 0 6.5 6"><rect x="1.5" y=".3" width="3.5" height="2.2" fill="#fff" stroke="#505050" stroke-width=".4"/><rect x=".3" y="2.2" width="5.9" height="2.6" fill="#a8a8a8" stroke="#404040" stroke-width=".4" rx=".5"/><rect x="1.3" y="4.3" width="3.9" height="1.5" fill="#fff" stroke="#505050" stroke-width=".4"/></svg>
<div class="t" style="left:100px;top:202px;font-size:4.6px;letter-spacing:-0.22px;color:#202020">Print</div>
<svg class="a" style="left:86.8px;top:208.3px" width="6" height="6.5" viewBox="0 0 6 6.5"><path d="M.3 .3H3.5L5 1.8V6.2H.3Z" fill="#fff" stroke="#505050" stroke-width=".5"/><circle cx="2.8" cy="3.6" r="1.2" fill="none" stroke="#3070c0" stroke-width=".5"/><path d="M3.6 4.4L4.6 5.5" stroke="#3070c0" stroke-width=".6"/></svg>
<div class="t" style="left:93px;top:211px;font-size:4.6px;letter-spacing:-0.22px;color:#202020">Preview</div>
<div class="a" style="left:86px;top:217.8px;width:26.5px;height:0.7px;background:#d6d2c0"></div>
<div class="a" style="left:84px;top:408px;width:616px;height:7px;background:#f4f7fd"></div>
<div class="a" style="left:95.3px;top:408.6px;width:587.7px;height:6px;background:linear-gradient(#cbdafc,#b9cdfa);border-radius:1px"></div>
<div class="a" style="left:85px;top:408.6px;width:6.3px;height:6px;background:linear-gradient(135deg,#e0eafe,#b8ccf8);border-radius:1.2px"></div>
<svg class="a" style="left:85px;top:408.6px" width="6.3" height="6" viewBox="0 0 6.3 6"><path d="M4 1.5L2.3 3 4 4.5" stroke="#4d6fd0" stroke-width=".9" fill="none"/></svg>
<div class="a" style="left:692.8px;top:408.6px;width:6.8px;height:6px;background:linear-gradient(135deg,#d0defe,#a8c0f6);border-radius:1.2px"></div>
<svg class="a" style="left:692.8px;top:408.6px" width="6.8" height="6" viewBox="0 0 6.8 6"><path d="M2.6 1.5L4.3 3 2.6 4.5" stroke="#4d6fd0" stroke-width=".9" fill="none"/></svg>
<div class="a" style="left:0px;top:415px;width:700px;height:8px;background:#ECE9D8"></div>
<div class="a" style="left:0.6px;top:416.3px;width:610.6px;height:7px;border-top:0.7px solid #c4c0b0;border-left:0.7px solid #c4c0b0;border-right:0.7px solid #fbfaf6"></div>
<div class="a" style="left:612px;top:416.3px;width:39.6px;height:7px;border-top:0.7px solid #c4c0b0;border-left:0.7px solid #c4c0b0;border-right:0.7px solid #fbfaf6"></div>
<div class="a" style="left:652.4px;top:416.3px;width:39.6px;height:7px;border-top:0.7px solid #c4c0b0;border-left:0.7px solid #c4c0b0;border-right:0.7px solid #fbfaf6"></div>
<div class="t" style="left:2.2px;top:418px;font-size:5px;letter-spacing:-0.12px;color:#383838">Status</div>
<div class="t" style="left:614.2px;top:419px;font-size:4.8px;letter-spacing:-0.05px;color:#383838">3/6/2010</div>
<div class="t" style="left:654.2px;top:419px;font-size:4.8px;letter-spacing:-0.2px;color:#383838">4:40 PM</div>
<svg class="a" style="left:694px;top:417px" width="6" height="6" viewBox="0 0 6 6"><path d="M5.5 1.5L1.5 5.5M5.5 3.5L3.5 5.5" stroke="#b8b4a4" stroke-width=".7"/></svg>
<div class="a" style="left:68.6px;top:417.8px;width:40.5px;height:6px;background:#ffffe1;border:0.7px solid #505050;border-bottom:none"></div>
<div class="t" style="left:70px;top:420px;font-size:4.6px;letter-spacing:-0.12px;color:#303030">Python - [Catfile]</div>
</div></body></html>
